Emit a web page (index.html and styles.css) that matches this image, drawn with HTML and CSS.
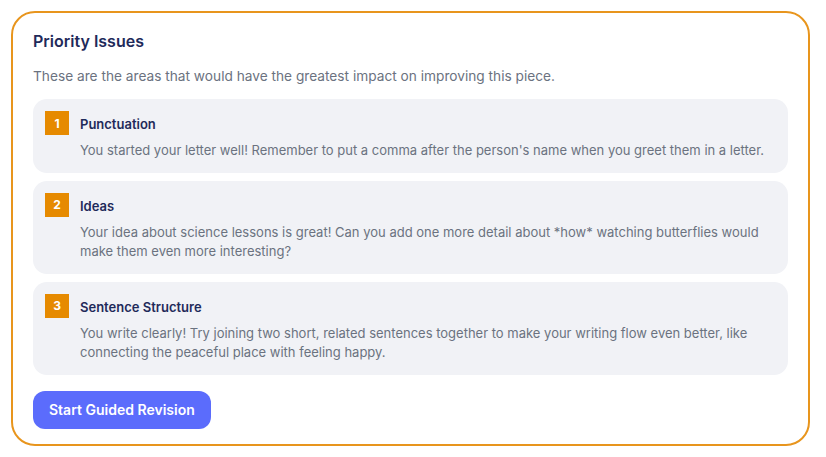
FILE: index.html
```html
<!DOCTYPE html>
<html lang="en">
<head>
  <meta charset="UTF-8">
  <meta name="viewport" content="width=device-width, initial-scale=1.0">
  <title>Priority Issues</title>
  <link rel="stylesheet" href="styles.css">
</head>
<body>

  <div class="card">
    <h2 class="card-title">Priority Issues</h2>
    <p class="card-intro">These are the areas that would have the greatest impact on improving this piece.</p>

    <div class="issues">
      <div class="issue">
        <span class="badge">1</span>
        <div class="issue-body">
          <h3>Punctuation</h3>
          <p>You started your letter well! Remember to put a comma after the person's name when you greet them in a letter.</p>
        </div>
      </div>

      <div class="issue">
        <span class="badge">2</span>
        <div class="issue-body">
          <h3>Ideas</h3>
          <p>Your idea about science lessons is great! Can you add one more detail about *how* watching butterflies would make them even more interesting?</p>
        </div>
      </div>

      <div class="issue">
        <span class="badge">3</span>
        <div class="issue-body">
          <h3>Sentence Structure</h3>
          <p>You write clearly! Try joining two short, related sentences together to make your writing flow even better, like connecting the peaceful place with feeling happy.</p>
        </div>
      </div>
    </div>

    <button class="btn-primary">Start Guided Revision</button>
  </div>

</body>
</html>
```

FILE: styles.css
```css
body {
  font-family: 'Inter', sans-serif;
  background-color: #ffffff;
  margin: 0;
  padding: 11px;
}

.card {
  width: 799px;
  box-sizing: border-box;
  border: 2px solid #e8951d;
  border-radius: 24px;
  padding: 16px 20px 15px;
  background-color: #fff;
}

.card-title {
  font-size: 16px;
  font-weight: 600;
  line-height: 24px;
  color: #1f2a5a;
  margin: 0 0 13px;
}

.card-intro {
  font-size: 13.7px;
  line-height: 20px;
  color: #6b7280;
  margin: 0 0 13px;
}

.issues {
  display: flex;
  flex-direction: column;
  gap: 8px;
}

.issue {
  display: flex;
  gap: 11px;
  align-items: flex-start;
  background-color: #f1f2f6;
  border-radius: 14px;
  padding: 12px 14px 12px 12px;
}

.badge {
  flex: none;
  width: 24px;
  height: 24px;
  display: flex;
  align-items: center;
  justify-content: center;
  background-color: #e68a00;
  color: #fff;
  font-size: 12px;
  font-weight: 700;
}

.issue-body h3 {
  font-size: 13px;
  font-weight: 600;
  line-height: 24px;
  color: #1f2a5a;
  margin: 1px 0 5px;
}

.issue-body p {
  font-size: 13px;
  line-height: 19.5px;
  color: #6b7280;
  margin: 0;
}

.btn-primary {
  margin-top: 16px;
  height: 38px;
  padding: 0 16px;
  border: none;
  border-radius: 12px;
  background-color: #5b6cfc;
  color: #fff;
  font-family: 'Inter', sans-serif;
  font-size: 14px;
  font-weight: 600;
  cursor: pointer;
}
```
